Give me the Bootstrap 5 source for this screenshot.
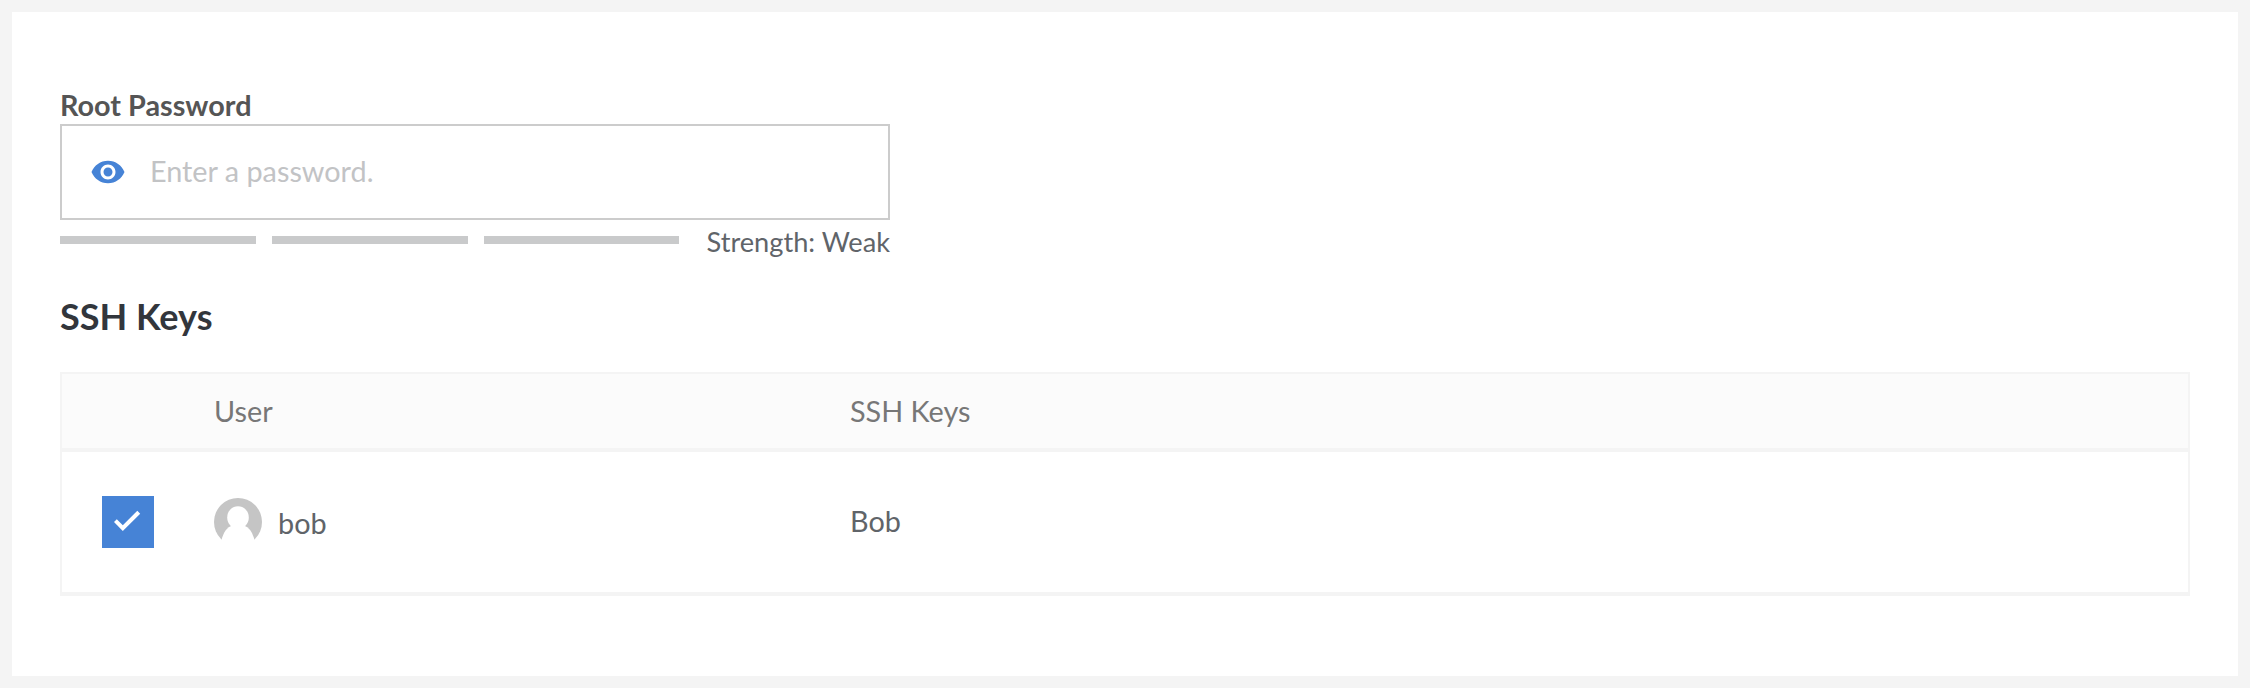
<!DOCTYPE html>
<html lang="en">
<head>
<meta charset="utf-8">
<meta name="viewport" content="width=device-width, initial-scale=1">
<title>Root Password and SSH Keys</title>
<link href="https://cdn.jsdelivr.net/npm/bootstrap@5.3.0/dist/css/bootstrap.min.css" rel="stylesheet">
<style>
body { background: #f4f4f4; font-family: Lato, sans-serif; font-size: 28.8px; line-height: 34px; color: #606469; padding: 12px; }
.panel { height: 664px; padding: 76px 48px 0; }
.password-field { width: 830px; }
.field-label { color: #555; padding-bottom: 2px; }
.password-box { height: 96px; border: 2px solid #ccc; padding-left: 28px; }
.password-box .form-control { font-size: inherit; line-height: 34px; padding: 0 0 2px 24px; color: #606469; }
.password-box .form-control::placeholder { color: #c2c3c5; opacity: 1; }
.toggle-btn { line-height: 0; color: #4683d6; }
.strength-row { height: 42px; }
.meter { gap: 16px; margin-right: 28px; padding-top: 16px; }
.meter-bar { height: 8px; background: #c9cacb; }
.meter-bar:not(:last-child) { flex: 0 0 196px !important; }
.strength-text { padding-top: 5px; font-size: 27.2px; }
.section-title { font-size: 36px; line-height: 44px; color: #32363c; margin: 32px 0 34px; }
.keys-table { border: 2px solid #f4f4f4; border-bottom: 0; table-layout: fixed; border-collapse: separate; border-spacing: 0; }
.keys-table th, .keys-table td { padding: 0; border-bottom: 4px solid #f4f4f4; vertical-align: middle; }
.keys-table th { height: 78px; background: #fbfbfb; color: #777; font-weight: 400; }
.keys-table td { height: 144px; color: #606469; }
.col-check { width: 152px; }
.col-user { width: 636px; }
.check-cell { padding-left: 40px !important; }
.check-square { width: 52px; height: 52px; background: #4683d6; }
.user-name { padding: 2px 0 0 16px; }
.key-name { padding-bottom: 2px !important; }
</style>
</head>
<body>
<main class="panel bg-white">
  <div class="password-field">
    <label for="root-password" class="field-label fw-bold d-block">Root Password</label>
    <div class="password-box d-flex align-items-center">
      <button type="button" class="toggle-btn btn p-0 border-0" aria-label="Show password">
        <svg width="36" height="36" viewBox="0 0 24 24" fill="currentColor"><path d="M12 4.5C7 4.5 2.73 7.61 1 12c1.73 4.39 6 7.5 11 7.5s9.27-3.11 11-7.5c-1.73-4.39-6-7.5-11-7.5zM12 17c-2.76 0-5-2.24-5-5s2.24-5 5-5 5 2.24 5 5-2.24 5-5 5zm0-8c-1.66 0-3 1.34-3 3s1.34 3 3 3 3-1.34 3-3-1.34-3-3-3z"/></svg>
      </button>
      <input id="root-password" type="password" class="form-control border-0 shadow-none bg-transparent" placeholder="Enter a password.">
    </div>
    <div class="strength-row d-flex">
      <div class="meter d-flex flex-fill">
        <div class="meter-bar flex-fill"></div>
        <div class="meter-bar flex-fill"></div>
        <div class="meter-bar flex-fill"></div>
      </div>
      <div class="strength-text text-nowrap">Strength: Weak</div>
    </div>
  </div>
  <h2 class="section-title fw-bold">SSH Keys</h2>
  <table class="keys-table table mb-0">
    <colgroup><col class="col-check"><col class="col-user"><col></colgroup>
    <thead>
      <tr><th aria-label="Select"></th><th scope="col">User</th><th scope="col">SSH Keys</th></tr>
    </thead>
    <tbody>
      <tr>
        <td class="check-cell">
          <div class="check-square" role="checkbox" aria-checked="true" aria-label="Select bob">
            <svg class="d-block" width="52" height="52" viewBox="0 0 52 52" fill="#fff"><path d="M12 26l2.800-2.800 6 6.100L35.300 14.800l2.900 2.900L20.800 35z"/></svg>
          </div>
        </td>
        <td>
          <div class="d-flex align-items-center">
            <svg width="48" height="48" viewBox="0 0 48 48">
              <defs>
                <filter id="avatar-soft" x="-20%" y="-20%" width="140%" height="140%"><feGaussianBlur stdDeviation=".7"/></filter>
              </defs>
              <circle cx="24" cy="24" r="24" fill="#c5c5c5"/>
              <g fill="#fff" filter="url(#avatar-soft)">
                <ellipse cx="24" cy="19.500" rx="10.800" ry="11.200"/>
                <path d="M18 27.500Q11 30 8 40L5 54h38l-3-14Q37 30 30 27.500z"/>
              </g>
            </svg>
            <span class="user-name">bob</span>
          </div>
        </td>
        <td class="key-name">Bob</td>
      </tr>
    </tbody>
  </table>
</main>
<script src="https://cdn.jsdelivr.net/npm/bootstrap@5.3.0/dist/js/bootstrap.bundle.min.js"></script>
</body>
</html>
